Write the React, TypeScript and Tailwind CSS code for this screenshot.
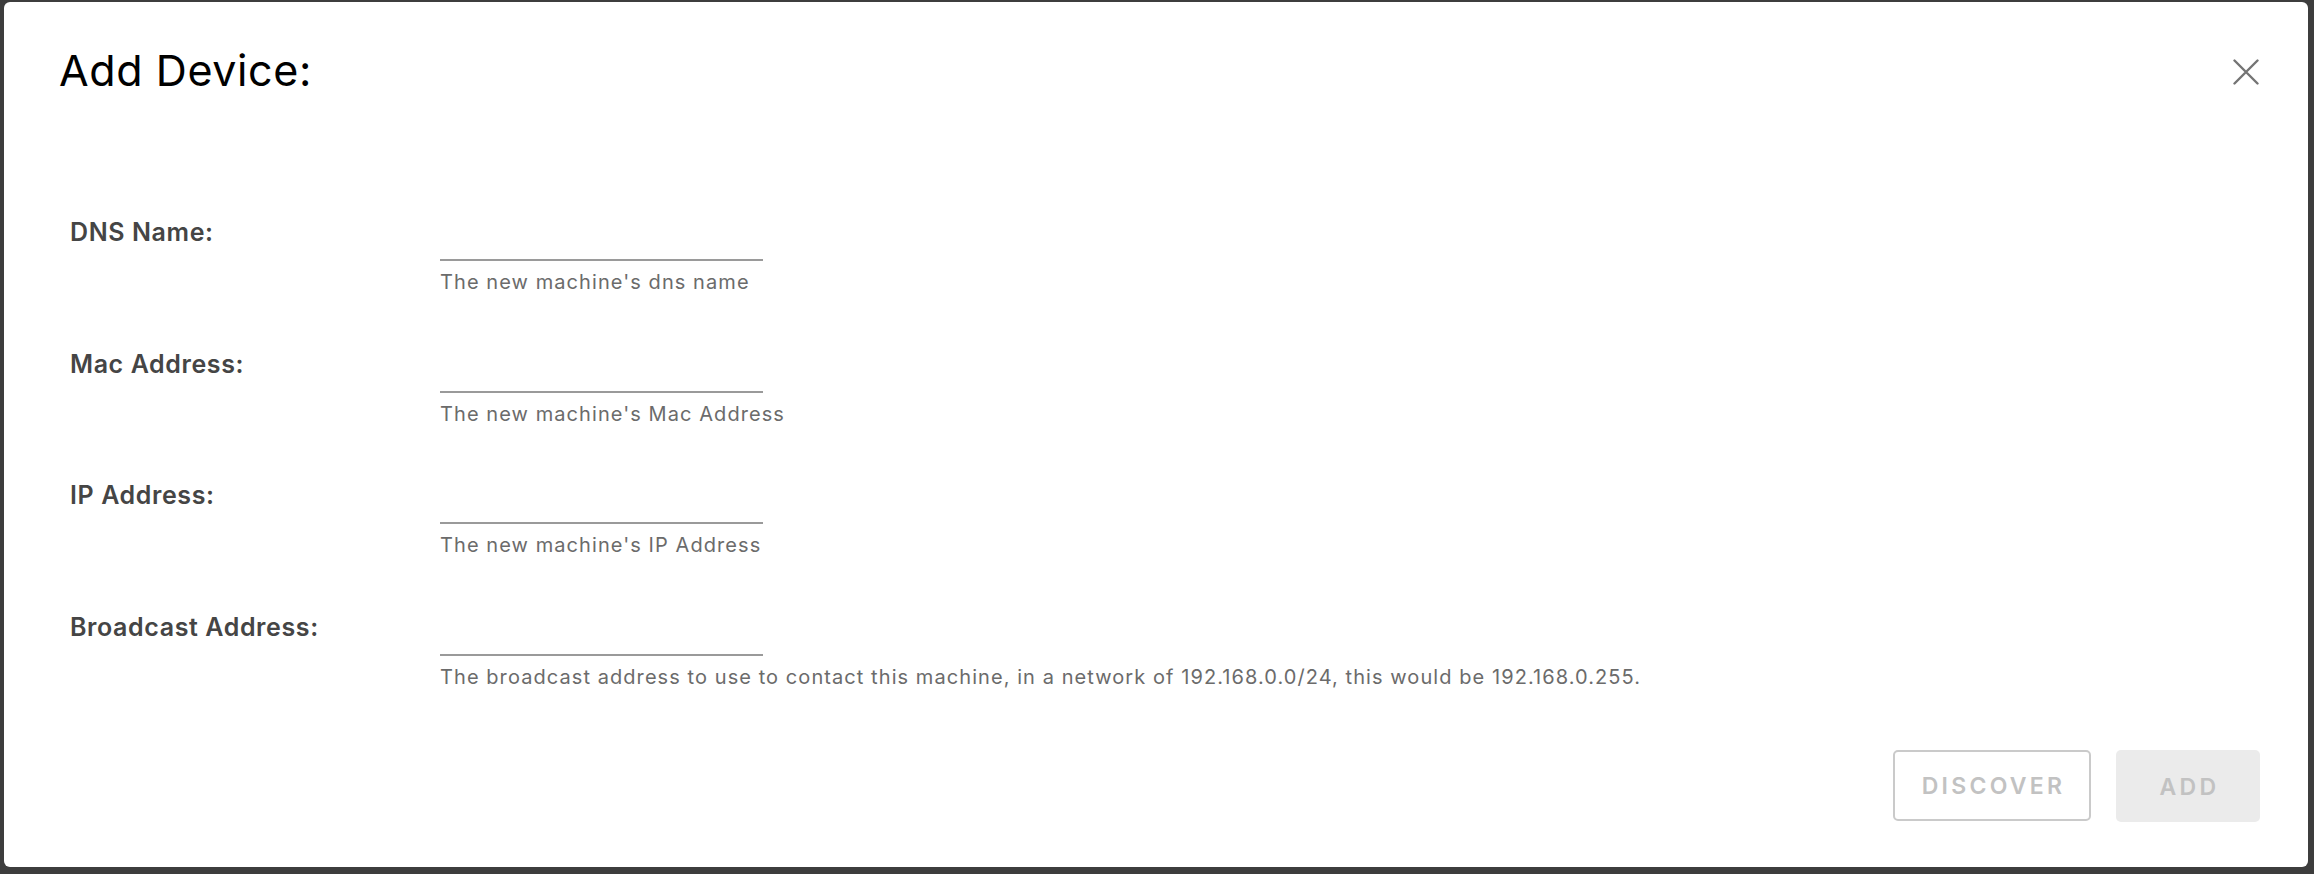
import React from "react";

const rows = [
  { label: "DNS Name:", help: "The new machine's dns name" },
  { label: "Mac Address:", help: "The new machine's Mac Address" },
  { label: "IP Address:", help: "The new machine's IP Address" },
  {
    label: "Broadcast Address:",
    help:
      "The broadcast address to use to contact this machine, in a network of 192.168.0.0/24, this would be 192.168.0.255.",
  },
];

export default function App() {
  return (
    <div
      className="w-full h-[874px] bg-[#3d3d3d] pt-[2px] pl-[4px] overflow-hidden"
      style={{ fontFamily: "Inter, 'Open Sans', 'Liberation Sans', sans-serif" }}
    >
      <div className="w-[2304px] h-[865px] bg-white rounded-[6px] flex flex-col">
        {/* header */}
        <div className="flex items-center justify-between pl-[55px] pr-[49px] pt-[42px]">
          <h1 className="text-[43px] leading-[52px] font-normal text-black tracking-[0.6px]">
            Add Device:
          </h1>
          <button className="w-[26px] h-[26px] flex items-center justify-center mt-[3px]" aria-label="Close">
            <svg width="26" height="26" viewBox="0 0 26 26" fill="none">
              <path
                d="M1.5 1.5 L24.5 24.5 M24.5 1.5 L1.5 24.5"
                stroke="#747474"
                strokeWidth="2.4"
                strokeLinecap="round"
              />
            </svg>
          </button>
        </div>

        {/* form */}
        <div className="flex flex-col gap-y-[59.5px] pl-[66px] mt-[128px]">
          {rows.map((r) => (
            <div key={r.label} className="flex items-start">
              <div className="w-[370px] shrink-0 text-[25px] leading-[16px] font-semibold text-[#454545] tracking-[0.6px] whitespace-nowrap">
                {r.label}
              </div>
              <div className="flex flex-col">
                <div className="w-[323px] h-[37px] border-b-2 border-[#9a9a9a]" />
                <div className="mt-[7px] text-[20px] leading-[28px] text-[#6b6b6b] tracking-[1.07px] whitespace-nowrap">
                  {r.help}
                </div>
              </div>
            </div>
          ))}
        </div>

        {/* footer */}
        <div className="flex justify-end gap-[25px] pr-[48px] mt-[59px]">
          <button className="w-[198px] h-[71px] border-2 border-[#cacaca] rounded-[5px] text-[23px] font-semibold tracking-[3.3px] text-[#c2c2c2] flex items-center justify-center pl-[3px] pt-[3px]">
            DISCOVER
          </button>
          <button className="w-[144px] h-[72px] bg-[#ebebeb] rounded-[5px] text-[23px] font-semibold tracking-[3.3px] text-[#c2c2c2] flex items-center justify-center pl-[3px] pt-[3px]">
            ADD
          </button>
        </div>
      </div>
    </div>
  );
}
